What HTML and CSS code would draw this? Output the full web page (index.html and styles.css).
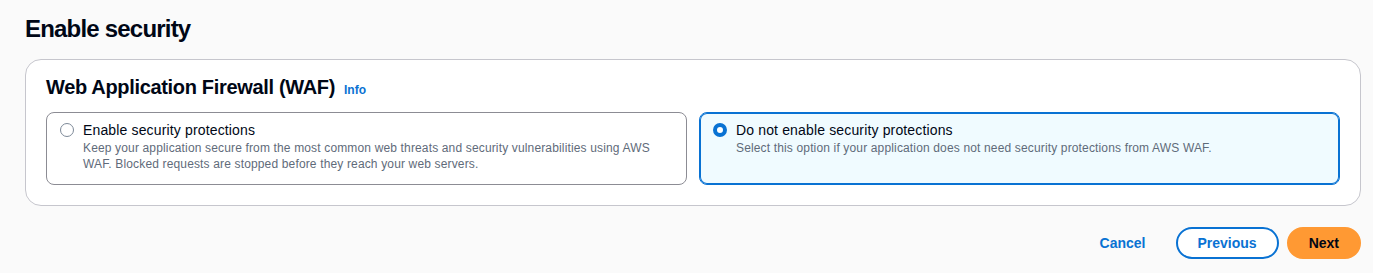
FILE: index.html
```html
<!DOCTYPE html>
<html lang="en">
<head>
<meta charset="UTF-8"/>
<title>Enable security</title>
<link rel="stylesheet" href="styles.css">
</head>
<body>

<div class="page">
  <h1 class="page-title">Enable security</h1>

  <div class="panel">
    <div class="panel-header">
      <h2>Web Application Firewall (WAF)</h2>
      <a href="#" class="info-link">Info</a>
    </div>

    <div class="tiles">
      <label class="tile">
        <span class="radio"></span>
        <span class="tile-text">
          <span class="tile-label">Enable security protections</span>
          <span class="tile-desc">Keep your application secure from the most common web threats and security vulnerabilities using AWS WAF. Blocked requests are stopped before they reach your web servers.</span>
        </span>
      </label>
      <label class="tile selected">
        <span class="radio"></span>
        <span class="tile-text">
          <span class="tile-label">Do not enable security protections</span>
          <span class="tile-desc">Select this option if your application does not need security protections from AWS WAF.</span>
        </span>
      </label>
    </div>
  </div>

  <div class="actions">
    <button class="btn btn-link">Cancel</button>
    <button class="btn btn-normal">Previous</button>
    <button class="btn btn-primary">Next</button>
  </div>
</div>

</body>
</html>
```

FILE: styles.css
```css
*{box-sizing:border-box;margin:0;padding:0;}
body{font-family:'Liberation Sans',Arial,sans-serif;background:#fafafa;color:#000716;}
.page{padding:14px 12px 0 25px;}
.page-title{font-size:24px;line-height:30px;font-weight:700;letter-spacing:-0.8px;color:#000716;margin-bottom:15px;}
.panel{background:#fff;border:1px solid #c6c6cd;border-radius:16px;padding:15px 20px 20px 20px;}
.panel-header{display:flex;align-items:baseline;gap:9px;margin-bottom:13px;}
.panel-header h2{font-size:20px;line-height:24px;font-weight:700;letter-spacing:-0.33px;color:#000716;}
.info-link{font-size:12px;font-weight:700;color:#0972d3;text-decoration:none;}
.tiles{display:grid;grid-template-columns:1fr 1fr;gap:12px;}
.tile{display:flex;align-items:flex-start;gap:9px;border:1px solid #8c8c94;border-radius:8px;padding:7px 16px 12px 13px;background:#fff;cursor:pointer;}
.tile.selected{border-color:#0972d3;box-shadow:inset 0 0 0 1px #0972d3;background:#f0fbff;}
.radio{flex:none;width:14px;height:14px;border-radius:50%;border:1px solid #7d8998;margin-top:3px;background:#fff;}
.tile.selected .radio{border:4px solid #0972d3;}
.tile-text{display:flex;flex-direction:column;}
.tile-label{font-size:14px;line-height:20px;letter-spacing:0.15px;color:#000716;}
.tile-desc{font-size:12px;line-height:16px;letter-spacing:0.15px;color:#5f6b7a;}
.actions{display:flex;justify-content:flex-end;gap:8px;margin-top:21px;}
.btn{font-family:inherit;font-size:14px;line-height:20px;font-weight:700;padding:4px 20px;border-radius:20px;border:2px solid transparent;cursor:pointer;background:none;}
.btn-link{color:#0972d3;}
.btn-normal{color:#0972d3;border-color:#0972d3;background:#fff;}
.btn-primary{color:#000716;background:#ff9933;border-color:#ff9933;}
```
